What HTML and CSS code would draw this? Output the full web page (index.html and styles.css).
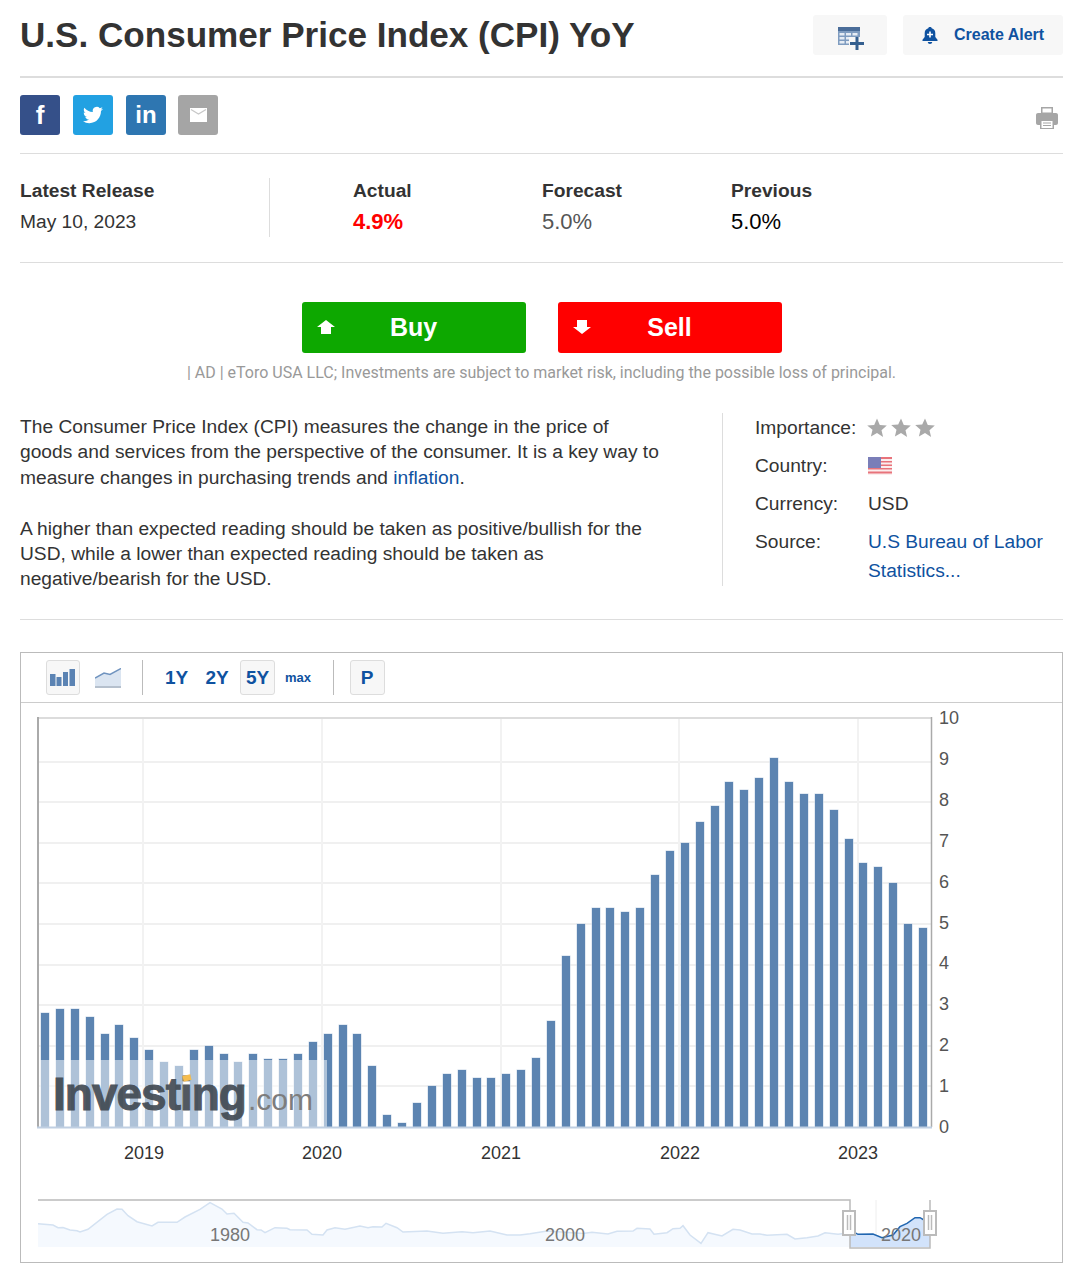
FILE: index.html
```html
<!DOCTYPE html>
<html lang="en">
  <head>
    <meta charset="UTF-8" />
    <title>U.S. Consumer Price Index (CPI) YoY</title>
    <link rel="stylesheet" href="styles.css">
  </head>
  <body>
    <!-- Title and actions -->
    <header class="title-row">
      <h1>U.S. Consumer Price Index (CPI) YoY</h1>
      <div class="title-actions">
        <a class="action action-table">
          <svg width="27" height="23" viewBox="0 0 27 23">
            <rect x="0" y="0" width="22" height="18" fill="#7f9cc0" />
            <rect x="0" y="0" width="22" height="4" fill="#4a6d99" />
            <g fill="#e6ecf4">
              <rect x="1.5" y="6" width="5" height="2.5" /><rect x="8" y="6" width="5" height="2.5" /><rect x="14.5" y="6" width="5" height="2.5" />
              <rect x="1.5" y="10" width="5" height="2.5" /><rect x="8" y="10" width="5" height="2.5" />
              <rect x="1.5" y="14" width="5" height="2.5" /><rect x="8" y="14" width="5" height="2.5" />
            </g>
            <rect x="11" y="10" width="16" height="13" fill="#f7f7f7" />
            <path d="M17.5 10h3v5h5.500v3h-5.500v5h-3v-5H12v-3h5.500z" fill="#345f8f" />
          </svg>
        </a>
        <a class="action action-alert">
          <svg width="16" height="17" viewBox="0 0 16 17">
            <path d="M8 0c1 0 1.600 .5 1.700 1.300 2.300 .6 3.600 2.400 3.600 4.700v4l2.200 2.700v1.300H.5v-1.300L2.700 10V6c0-2.300 1.300-4.100 3.600-4.700C6.400 .5 7 0 8 0zM5.800 15h4.400c0 1.200-1 2-2.200 2s-2.200-.8-2.200-2z" fill="#0f52a0" />
            <path d="M7.200 4.500h1.600v2.200H11v1.600H8.800v2.200H7.200V8.300H5V6.700h2.200z" fill="#fff" />
          </svg>
          <span>Create Alert</span>
        </a>
      </div>
    </header>

    <!-- Share buttons -->
    <div class="share-row">
      <div class="share-list">
        <a class="share share-fb">f</a>
        <a class="share share-tw">
          <svg width="20" height="20" viewBox="0 0 24 24">
            <path d="M23.953 4.57a10 10 0 01-2.825.775 4.958 4.958 0 002.163-2.723c-.951.555-2.005.959-3.127 1.184a4.92 4.92 0 00-8.384 4.482C7.69 8.095 4.067 6.13 1.64 3.162a4.822 4.822 0 00-.666 2.475c0 1.71.87 3.213 2.188 4.096a4.904 4.904 0 01-2.228-.616v.06a4.923 4.923 0 003.946 4.827 4.996 4.996 0 01-2.212.085 4.936 4.936 0 004.604 3.417 9.867 9.867 0 01-6.102 2.105c-.39 0-.779-.023-1.17-.067a13.995 13.995 0 007.557 2.209c9.053 0 13.998-7.496 13.998-13.985 0-.21 0-.42-.015-.63A9.935 9.935 0 0024 4.59z" fill="#fff" />
          </svg>
        </a>
        <a class="share share-in">in</a>
        <a class="share share-mail">
          <svg width="17" height="14" viewBox="0 0 17 14">
            <rect width="17" height="14" fill="#fff" />
            <path d="M1 1.500l7.500 4.500 7.500-4.500" fill="none" stroke="#c8c8c8" stroke-width="1.300" />
          </svg>
        </a>
      </div>
      <a class="print">
        <svg width="22" height="22" viewBox="0 0 22 22">
          <path d="M5 0h12v7H5z" fill="#a6a6a6" />
          <path d="M6.500 1.500h9v4h-9z" fill="#fff" />
          <path d="M2 6h18c1.100 0 2 .9 2 2v8c0 1.100-.9 2-2 2h-2v4H4v-4H2c-1.100 0-2-.9-2-2V8c0-1.100.9-2 2-2z" fill="#a6a6a6" />
          <path d="M5.500 14h11v7h-11z" fill="#fff" />
          <path d="M7 16h8M7 18.500h8" stroke="#a6a6a6" stroke-width="1.200" />
        </svg>
      </a>
    </div>

    <!-- Latest release -->
    <section class="release">
      <div class="release-date">
        <div class="release-label">Latest Release</div>
        <div class="release-value">May 10, 2023</div>
      </div>
      <div class="release-stats">
        <div class="stat">
          <div class="release-label">Actual</div>
          <div class="stat-value stat-down">4.9%</div>
        </div>
        <div class="stat">
          <div class="release-label">Forecast</div>
          <div class="stat-value stat-grey">5.0%</div>
        </div>
        <div class="stat">
          <div class="release-label">Previous</div>
          <div class="stat-value stat-black">5.0%</div>
        </div>
      </div>
    </section>

    <!-- Ad buttons -->
    <section class="trade">
      <div class="trade-buttons">
        <a class="trade-btn trade-buy">
          <svg class="trade-arrow" width="18" height="14" viewBox="0 0 18 14"><path d="M9 0l9 7h-4v7H4V7H0z" fill="#fff" /></svg>
          Buy
        </a>
        <a class="trade-btn trade-sell">
          <svg class="trade-arrow" width="18" height="14" viewBox="0 0 18 14"><path d="M4 0h10v7h4l-9 7-9-7h4z" fill="#fff" /></svg>
          Sell
        </a>
      </div>
      <p class="disclaimer">| AD | eToro USA LLC; Investments are subject to market risk, including the possible loss of principal.</p>
    </section>

    <!-- Description and details -->
    <section class="about">
      <div class="about-text">
        <p>The Consumer Price Index (CPI) measures the change in the price of goods and services from the perspective of the consumer. It is a key way to measure changes in purchasing trends and <a class="link">inflation</a>.</p>
        <p>A higher than expected reading should be taken as positive/bullish for the USD, while a lower than expected reading should be taken as negative/bearish for the USD.</p>
      </div>
      <dl class="details">
        <dt>Importance:</dt>
        <dd class="stars">
          <svg width="68" height="20" viewBox="0 0 68 20">
            <path d="M10 .5l2.800 6.500 7 .6-5.300 4.600 1.600 6.900L10 15l-6.100 3.600 1.600-6.900L.2 7.600l7-.6z" fill="#a9a9a9" />
            <path d="M34 .5l2.800 6.500 7 .6-5.300 4.600 1.600 6.900L34 15l-6.100 3.600 1.600-6.900-5.300-4.600 7-.6z" fill="#a9a9a9" />
            <path d="M58 .5l2.800 6.500 7 .6-5.300 4.600 1.600 6.900L58 15l-6.100 3.600 1.600-6.900-5.300-4.600 7-.6z" fill="#a9a9a9" />
          </svg>
        </dd>
        <dt>Country:</dt>
        <dd class="flag-cell">
          <svg width="24" height="18" viewBox="0 0 24 18">
            <rect width="24" height="18" fill="#fbeeee" />
            <g fill="#e8737b">
              <rect y="0" width="24" height="2" /><rect y="4" width="24" height="1.5" /><rect y="7.5" width="24" height="1.5" />
              <rect y="11" width="24" height="1.5" /><rect y="14.5" width="24" height="2" />
            </g>
            <rect y="0" width="13" height="11" fill="#7a7eb8" />
          </svg>
        </dd>
        <dt>Currency:</dt>
        <dd>USD</dd>
        <dt>Source:</dt>
        <dd><a class="link">U.S Bureau of Labor Statistics...</a></dd>
      </dl>
    </section>

    <!-- Chart -->
    <section class="chart-box">
      <div class="toolbar">
        <div class="tool-group tool-group-types">
          <a class="tool-btn tool-btn-active">
            <svg width="26" height="17" viewBox="0 0 26 17">
              <rect x="0" y="5" width="5.500" height="12" fill="#5b83b3" /><rect x="6.500" y="8" width="5" height="9" fill="#5b83b3" />
              <rect x="13" y="3" width="5" height="14" fill="#5b83b3" /><rect x="19.500" y="0" width="5.500" height="17" fill="#5b83b3" />
            </svg>
          </a>
          <a class="tool-btn">
            <svg width="26" height="20" viewBox="0 0 26 20">
              <path d="M0 10l9-5 6 1.500L26 .5V18H0z" fill="#dbe5f1" />
              <path d="M0 10l9-5 6 1.500L26 .5" fill="none" stroke="#6f93bf" stroke-width="1.500" />
              <rect y="18" width="26" height="2" fill="#b5c0cd" />
            </svg>
          </a>
        </div>
        <span class="tool-sep"></span>
        <div class="tool-group tool-group-ranges">
          <a class="tool-btn tool-range">1Y</a>
          <a class="tool-btn tool-range">2Y</a>
          <a class="tool-btn tool-range tool-btn-active">5Y</a>
          <a class="tool-btn tool-range tool-max">max</a>
        </div>
        <span class="tool-sep"></span>
        <a class="tool-btn tool-range tool-btn-active">P</a>
      </div>

      <!-- viewBox uses page coordinates so the numbers read against the screenshot -->
      <svg id="chart" class="chart" width="1041" height="559" viewBox="21 703 1041 559">
        <g id="gridY"></g>
        <g stroke="#f2f2f2" stroke-width="2">
          <path d="M143 719V1127M322 719V1127M501 719V1127M679 719V1127M858 719V1127" />
        </g>
        <g id="bars"></g>

        <!-- watermark -->
        <rect x="38" y="1060" width="289" height="67" fill="#fff" opacity="0.5" />
        <text class="wm-main" x="53" y="1110">Investing</text>
        <rect x="183" y="1075" width="8" height="6" fill="#f6bd4f" transform="rotate(-12 187 1078)" />
        <text class="wm-com" x="248" y="1110">.com</text>

        <!-- plot frame -->
        <path d="M38 718H931" stroke="#dcdcdc" stroke-width="2" fill="none" />
        <path d="M38 717V1127" stroke="#aaa" stroke-width="2" fill="none" />
        <path d="M931.500 717V1127" stroke="#aaa" stroke-width="1.500" fill="none" />
        <path d="M37 1127.500H932" stroke="#c0cfe2" stroke-width="2" fill="none" />

        <g class="axis-y" id="axisY"></g>
        <g class="axis-x">
          <text x="144" y="1159">2019</text>
          <text x="322" y="1159">2020</text>
          <text x="501" y="1159">2021</text>
          <text x="680" y="1159">2022</text>
          <text x="858" y="1159">2023</text>
        </g>

        <!-- navigator -->
        <path d="M876 1200V1247" stroke="#eee" />
        <path id="navArea" fill="#f5f9fe" />
        <path id="navLine" fill="none" stroke="#d4e2f2" stroke-width="1.500" />
        <path d="M850 1232.700L855 1232.700 858 1234.300 873 1234 882 1237.700 893 1235 900 1226.700 907 1223.300 915 1217.700 920 1217.700 924 1220 930 1222V1247H850Z" fill="#d2e3fb" />
        <path d="M850 1232.700L855 1232.700 858 1234.300 873 1234 882 1237.700 893 1235 900 1226.700 907 1223.300 915 1217.700 920 1217.700 924 1220" fill="none" stroke="#2166b0" stroke-width="1.500" />
        <g class="axis-nav">
          <text x="230" y="1241">1980</text>
          <text x="565" y="1241">2000</text>
          <text x="901" y="1241">2020</text>
        </g>
        <path d="M38 1200H850V1248H930V1200" fill="none" stroke="#bbb" stroke-width="1.500" />
        <g class="nav-handle">
          <rect x="843" y="1211" width="12" height="24" />
          <path d="M847.500 1215V1230M850.500 1215V1230" />
          <rect x="924" y="1211" width="12" height="24" />
          <path d="M928.500 1215V1230M931.500 1215V1230" />
        </g>
      </svg>
    </section>

    <script src="chart.js"></script>
  </body>
</html>
```
FILE: styles.css
```css
* {
  box-sizing: border-box;
}
body {
  margin: 0;
  padding: 0 17px 0 20px;
  font-family: "Liberation Sans", Arial, sans-serif;
  font-size: 19.2px;
  color: #333;
  background: #fff;
}
a {
  text-decoration: none;
  cursor: pointer;
}
.link {
  color: #0f52a0;
}

/* title */
.title-row {
  display: flex;
  justify-content: space-between;
  height: 78px;
  padding-top: 15px;
  border-bottom: 2px solid #ddd;
}
h1 {
  margin: 0;
  font-size: 35.1px;
  line-height: 40px;
  font-weight: bold;
  color: #333;
}
.title-actions {
  display: flex;
  gap: 16px;
}
.action {
  display: flex;
  align-items: center;
  height: 40px;
  background: #f7f7f7;
  border-radius: 3px;
  color: #0f52a0;
}
.action-table {
  width: 74px;
  padding: 6px 0 0 25px;
}
.action-alert {
  width: 160px;
  padding-left: 19px;
  gap: 16px;
  font-size: 16px;
  font-weight: bold;
}

/* share */
.share-row {
  display: flex;
  justify-content: space-between;
  align-items: center;
  height: 76px;
  padding-bottom: 1px;
  border-bottom: 1px solid #ddd;
}
.share-list {
  display: flex;
  gap: 13px;
}
.share {
  display: flex;
  align-items: center;
  justify-content: center;
  width: 40px;
  height: 40px;
  border-radius: 3px;
  color: #fff;
  font-weight: bold;
}
.share-fb {
  background: #355089;
  font-size: 26px;
}
.share-tw {
  background: #22a1e2;
}
.share-in {
  background: #2e76b1;
  font-size: 24px;
}
.share-mail {
  margin-left: -1px;
  background: #a5a5a5;
}
.print {
  display: flex;
  margin: 6px 5px 0 0;
}

/* latest release */
.release {
  display: flex;
  height: 109px;
  padding-top: 24px;
  border-bottom: 1px solid #ddd;
}
.release-date {
  width: 250px;
  height: 59px;
  border-right: 1px solid #ddd;
}
.release-stats {
  display: flex;
  padding-left: 83px;
}
.stat {
  width: 189px;
}
.release-label {
  font-weight: bold;
  line-height: 26px;
}
.release-value {
  margin-top: 5px;
  line-height: 26px;
}
.stat-value {
  margin-top: 4px;
  font-size: 22px;
  line-height: 28px;
}
.stat-down {
  color: #f00;
  font-weight: bold;
}
.stat-grey {
  color: #555;
}
.stat-black {
  color: #000;
}

/* trade */
.trade {
  padding-top: 39px;
}
.trade-buttons {
  display: flex;
  justify-content: center;
  gap: 32px;
}
.trade-btn {
  position: relative;
  display: flex;
  align-items: center;
  justify-content: center;
  width: 224px;
  height: 51px;
  border-radius: 3px;
  color: #fff;
  font-size: 25px;
  font-weight: bold;
}
.trade-arrow {
  position: absolute;
  left: 15px;
  top: 18px;
}
.trade-buy {
  background: #0da800;
}
.trade-sell {
  background: #f00;
}
.disclaimer {
  margin: 10px 0 0;
  font-family: Roboto, "Liberation Sans", sans-serif;
  font-size: 16px;
  line-height: 20px;
  text-align: center;
  color: #999;
}

/* description */
.about {
  display: flex;
  height: 207px;
  margin-top: 30px;
  border-bottom: 1px solid #ddd;
}
.about-text {
  flex: none;
  width: 703px;
  height: 173px;
  padding: 1px 58px 0 0;
  border-right: 1px solid #ddd;
  line-height: 25.4px;
}
.about-text p {
  margin: 0 0 25.4px;
}
.details {
  display: grid;
  grid-template-columns: 113px 1fr;
  grid-auto-rows: min-content;
  row-gap: 9px;
  margin: 0;
  padding-left: 32px;
  line-height: 29px;
}
.details dt {
  margin: 0;
}
.details dd {
  margin: 0;
}
.stars svg {
  display: block;
  margin: 5px 0 0 -1px;
}
.flag-cell svg {
  display: block;
  margin-top: 6px;
}

/* chart */
.chart-box {
  margin-top: 32px;
  height: 611px;
  border: 1px solid #bbb;
}
.toolbar {
  display: flex;
  align-items: center;
  height: 50px;
  padding: 0 0 0 25px;
  border-bottom: 1px solid #ccc;
}
.tool-group {
  display: flex;
}
.tool-group-types {
  gap: 11px;
}
.tool-group-ranges {
  gap: 5.5px;
}
.tool-sep {
  width: 1px;
  height: 35px;
  margin: 0 16px 0 17px;
  background: #bbb;
}
.tool-btn {
  display: flex;
  align-items: center;
  justify-content: center;
  width: 34px;
  height: 35px;
  border: 1px solid transparent;
  border-radius: 3px;
  color: #0f52a0;
  font-weight: bold;
}
.tool-range {
  width: 35px;
  font-size: 19px;
}
.tool-max {
  font-size: 13px;
}
.tool-btn-active {
  background: #f7f7f7;
  border-color: #ddd;
}
.chart {
  display: block;
}
.axis-y text {
  font-size: 18px;
  fill: #555;
}
.axis-x text {
  font-size: 18px;
  fill: #333;
  text-anchor: middle;
}
.axis-nav text {
  font-size: 18px;
  fill: #777;
  text-anchor: middle;
}
.wm-main {
  font-size: 46px;
  font-weight: bold;
  letter-spacing: -1px;
  fill: #3f4750;
  stroke: #3f4750;
  stroke-width: 1;
  opacity: 0.9;
}
.wm-com {
  font-size: 30px;
  fill: #7d7d7d;
}
.nav-handle rect {
  fill: #fff;
  stroke: #bbb;
  stroke-width: 2;
}
.nav-handle path {
  fill: none;
  stroke: #bbb;
  stroke-width: 1.5;
}
```
FILE: chart.js
```js
const SVG_NS = "http://www.w3.org/2000/svg";

// CPI YoY, May 2018 to Apr 2023
const values = [
  2.8, 2.9, 2.9, 2.7, 2.3, 2.5, 2.2, 1.9,
  1.6, 1.5, 1.9, 2.0, 1.8, 1.6, 1.8, 1.68, 1.68, 1.8, 2.1, 2.3,
  2.5, 2.3, 1.5, 0.3, 0.1, 0.6, 1.0, 1.3, 1.4, 1.2, 1.2, 1.3,
  1.4, 1.7, 2.6, 4.2, 5.0, 5.4, 5.4, 5.3, 5.4, 6.2, 6.8, 7.0,
  7.5, 7.9, 8.5, 8.3, 8.6, 9.1, 8.5, 8.2, 8.2, 7.8, 7.1, 6.5,
  6.4, 6.0, 5.0, 4.9,
];

// Long run history for the navigator strip, x then y
const navPoints = [
  38, 1223.7, 53, 1225, 58, 1227.7, 63, 1227.5, 70, 1230, 77, 1230.7, 80, 1232, 88, 1229.3,
  107, 1214.3, 117, 1209, 122, 1209.3, 128, 1215.7, 137, 1221.7, 152, 1226, 158, 1222.3,
  177, 1222.3, 185, 1217, 200, 1209.3, 210, 1202.7, 222, 1209, 227, 1214, 234, 1213.3,
  243, 1222.3, 248, 1223, 257, 1229.7, 261, 1230, 265, 1232.7, 275, 1227.7, 287, 1228.3,
  290, 1229.7, 307, 1230, 312, 1234.3, 323, 1235, 327, 1230, 335, 1227.7, 345, 1229.3,
  360, 1226, 368, 1227.7, 373, 1226.7, 382, 1227, 386, 1223.3, 397, 1227.7, 403, 1232,
  427, 1231, 443, 1233.3, 462, 1231.7, 473, 1232.7, 490, 1231, 507, 1235, 520, 1235,
  530, 1233.7, 547, 1231, 583, 1233.5, 592, 1232.3, 608, 1234, 617, 1231.3, 633, 1231,
  637, 1228.3, 650, 1229, 654, 1234.3, 667, 1232.7, 673, 1228.7, 680, 1228.3, 683, 1225.7,
  690, 1235, 701, 1243.3, 708, 1232.7, 722, 1236, 733, 1229.3, 740, 1230, 752, 1234,
  760, 1234, 767, 1235.3, 787, 1234.3, 795, 1239, 807, 1237.7, 818, 1236, 825, 1232.7,
  838, 1234.3, 850, 1232.7,
];

const BASE_Y = 1127;
const UNIT = 40.6;
const LABEL_UNIT = 40.9;

function make(name, attrs, text) {
  const el = document.createElementNS(SVG_NS, name);
  for (const key in attrs) el.setAttribute(key, attrs[key]);
  if (text !== undefined) el.textContent = text;
  return el;
}

// Grid lines and axis labels
const gridY = document.getElementById("gridY");
const axisY = document.getElementById("axisY");
for (let i = 0; i <= 10; i++) {
  const y = Math.round(BASE_Y - i * UNIT);
  if (i > 0 && i < 10) {
    gridY.appendChild(make("rect", { x: 38, y: y - 1, width: 893, height: 2, fill: "#f0f0f0" }));
  }
  const labelY = Math.round(BASE_Y - i * LABEL_UNIT) + 6;
  axisY.appendChild(make("text", { x: 939, y: labelY }, String(i)));
}

// Bars
const bars = document.getElementById("bars");
values.forEach((v, i) => {
  const x = Math.round(41 + i * 14.88);
  const h = Math.round(v * UNIT);
  bars.appendChild(make("rect", { x: x - 0.5, y: BASE_Y - h - 0.5, width: 9, height: h + 0.5, fill: "#c9d7e8" }));
  bars.appendChild(make("rect", { x, y: BASE_Y - h, width: 8, height: h, fill: "#5c84b1" }));
});

// Navigator line and area
let navD = "M" + navPoints[0] + " " + navPoints[1] + "L" + navPoints.slice(2).join(" ");
document.getElementById("navLine").setAttribute("d", navD);
document.getElementById("navArea").setAttribute("d", navD + "V1247H38Z");
```
